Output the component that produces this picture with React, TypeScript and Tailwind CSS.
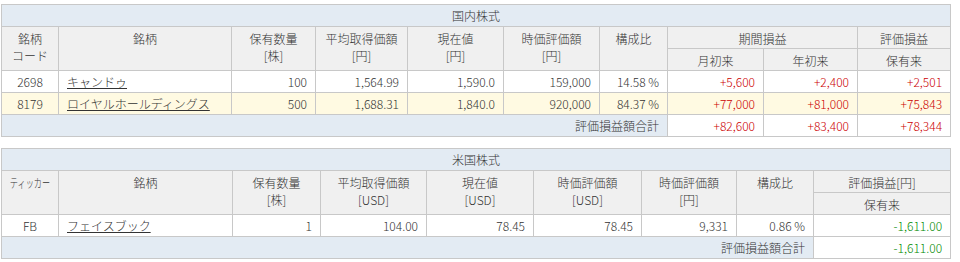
import React from "react";

const font = { fontFamily: '"Noto Sans CJK JP", "Liberation Sans", sans-serif' };

const th = "border border-[#c8c8c8] bg-[#f0f0f0] font-light text-center align-top pt-[3px] leading-[17px] px-1";
const td = "border border-[#c8c8c8] h-[22px] px-2 leading-[20px] py-0";
const title = "border border-[#c8c8c8] bg-[#e3ebf3] h-[22px] text-center font-light leading-[20px] py-0";
const red = "text-[#cc0000]";
const green = "text-[#008a00]";

function Domestic() {
  const widths = [57, 173, 84, 92, 96, 96, 68, 96, 94, 93];
  const rows = [
    { code: "2698", name: "キャンドゥ", qty: "100", avg: "1,564.99", cur: "1,590.0", val: "159,000", ratio: "14.58 %", m: "+5,600", y: "+2,400", h: "+2,501", bg: "bg-white" },
    { code: "8179", name: "ロイヤルホールディングス", qty: "500", avg: "1,688.31", cur: "1,840.0", val: "920,000", ratio: "84.37 %", m: "+77,000", y: "+81,000", h: "+75,843", bg: "bg-[#fffae2]" },
  ];
  return (
    <table className="table-fixed border-collapse w-[950px] text-[12px] text-[#333] font-light">
      <colgroup>
        {widths.map((w, i) => (
          <col key={i} style={{ width: w }} />
        ))}
      </colgroup>
      <thead>
        <tr>
          <th colSpan={10} className={title}>国内株式</th>
        </tr>
        <tr className="h-[22px]">
          <th rowSpan={2} className={th}>銘柄<br />コード</th>
          <th rowSpan={2} className={th}>銘柄</th>
          <th rowSpan={2} className={th}>保有数量<br />[株]</th>
          <th rowSpan={2} className={th}>平均取得価額<br />[円]</th>
          <th rowSpan={2} className={th}>現在値<br />[円]</th>
          <th rowSpan={2} className={th}>時価評価額<br />[円]</th>
          <th rowSpan={2} className={th}>構成比</th>
          <th colSpan={2} className={th}>期間損益</th>
          <th className={th}>評価損益</th>
        </tr>
        <tr className="h-[22px]">
          <th className={th}>月初来</th>
          <th className={th}>年初来</th>
          <th className={th}>保有来</th>
        </tr>
      </thead>
      <tbody>
        {rows.map((r) => (
          <tr key={r.code} className={r.bg}>
            <td className={`${td} text-center`}>{r.code}</td>
            <td className={`${td} text-left`}><a className="underline text-[#333] cursor-pointer">{r.name}</a></td>
            <td className={`${td} text-right`}>{r.qty}</td>
            <td className={`${td} text-right`}>{r.avg}</td>
            <td className={`${td} text-right`}>{r.cur}</td>
            <td className={`${td} text-right`}>{r.val}</td>
            <td className={`${td} text-right`}>{r.ratio}</td>
            <td className={`${td} text-right ${red}`}>{r.m}</td>
            <td className={`${td} text-right ${red}`}>{r.y}</td>
            <td className={`${td} text-right ${red}`}>{r.h}</td>
          </tr>
        ))}
        <tr>
          <td colSpan={7} className={`${td} text-right bg-[#e3ebf3]`}>評価損益額合計</td>
          <td className={`${td} text-right bg-white ${red}`}>+82,600</td>
          <td className={`${td} text-right bg-white ${red}`}>+83,400</td>
          <td className={`${td} text-right bg-white ${red}`}>+78,344</td>
        </tr>
      </tbody>
    </table>
  );
}

function Foreign() {
  const widths = [57, 174, 88, 106, 107, 108, 95, 77, 137];
  return (
    <table className="table-fixed border-collapse w-[950px] text-[12px] text-[#333] font-light">
      <colgroup>
        {widths.map((w, i) => (
          <col key={i} style={{ width: w }} />
        ))}
      </colgroup>
      <thead>
        <tr>
          <th colSpan={9} className={title}>米国株式</th>
        </tr>
        <tr className="h-[22px]">
          <th rowSpan={2} className={`${th} whitespace-nowrap`}>
            <span className="inline-block w-[60px] -mx-[6px] scale-x-[0.68] origin-center">ティッカー</span>
          </th>
          <th rowSpan={2} className={th}>銘柄</th>
          <th rowSpan={2} className={th}>保有数量<br />[株]</th>
          <th rowSpan={2} className={th}>平均取得価額<br />[USD]</th>
          <th rowSpan={2} className={th}>現在値<br />[USD]</th>
          <th rowSpan={2} className={th}>時価評価額<br />[USD]</th>
          <th rowSpan={2} className={th}>時価評価額<br />[円]</th>
          <th rowSpan={2} className={th}>構成比</th>
          <th className={th}>評価損益[円]</th>
        </tr>
        <tr className="h-[22px]">
          <th className={th}>保有来</th>
        </tr>
      </thead>
      <tbody>
        <tr className="bg-white">
          <td className={`${td} text-center`}>FB</td>
          <td className={`${td} text-left`}><a className="underline text-[#333] cursor-pointer">フェイスブック</a></td>
          <td className={`${td} text-right`}>1</td>
          <td className={`${td} text-right`}>104.00</td>
          <td className={`${td} text-right`}>78.45</td>
          <td className={`${td} text-right`}>78.45</td>
          <td className={`${td} text-right`}>9,331</td>
          <td className={`${td} text-right`}>0.86 %</td>
          <td className={`${td} text-right ${green}`}>-1,611.00</td>
        </tr>
        <tr>
          <td colSpan={8} className={`${td} text-right bg-[#e3ebf3]`}>評価損益額合計</td>
          <td className={`${td} text-right bg-white ${green}`}>-1,611.00</td>
        </tr>
      </tbody>
    </table>
  );
}

export default function App() {
  return (
    <div className="w-[960px] h-[262px] bg-white pt-[4px] pl-[1px] flex flex-col gap-[11px]" style={font}>
      <Domestic />
      <Foreign />
    </div>
  );
}
